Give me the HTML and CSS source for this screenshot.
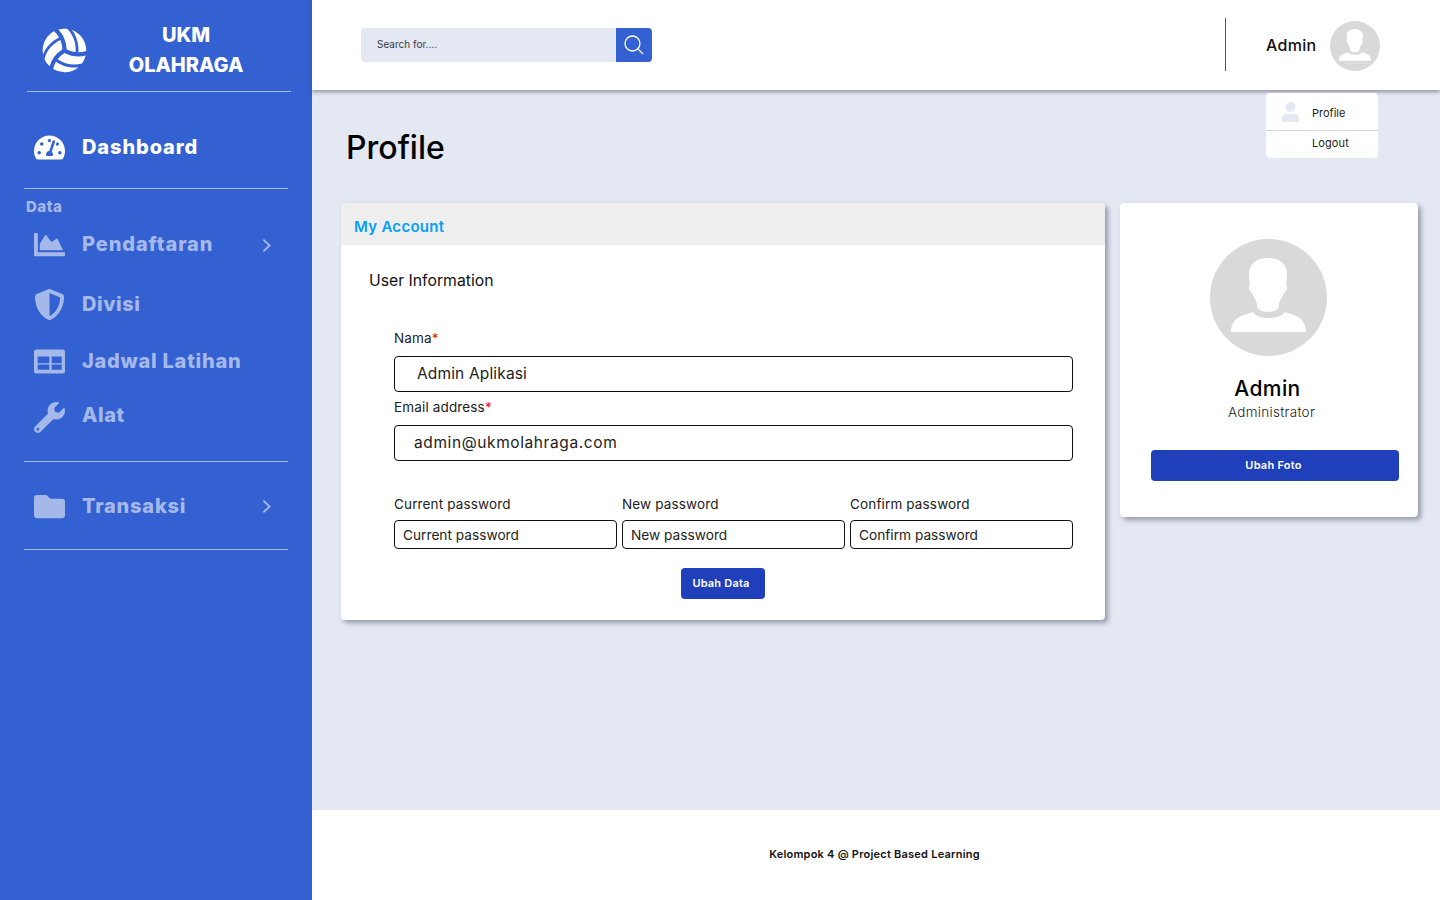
FILE: index.html
```html
<!DOCTYPE html>
<html lang="en">
<head>
<meta charset="utf-8">
<title>Profile</title>
<link rel="stylesheet" href="styles.css">
</head>
<body>
<svg class="defs" width="0" height="0" aria-hidden="true">
  <symbol id="person" viewBox="0 0 117 117">
    <path d="M58 19c11 0 20 6 19 18l-1 8c2 3 1 7-2 9-2 5-5 8-5 12 0 4-4 7-11 7s-11-3-11-7c0-4-3-7-5-12-3-2-4-6-2-9l-1-8c-1-12 8-18 19-18z"/>
    <path d="M21 93c0-9 5-15 13-17l9-3c5 8 27 8 32 0l9 3c7 2 12 8 12 17z"/>
  </symbol>
</svg>
<div class="app">
  <aside class="sidebar">
    <div class="brand">
      <svg class="brand-logo" viewBox="0 0 512 512"><path d="M231.39 243.48a285.56 285.56 0 0 0-22.7-105.7c-90.8 42.4-157.5 122.4-180.3 216.8a249 249 0 0 0 56.9 81.1 333.87 333.87 0 0 1 146.1-192.2zm-36.9-134.4a284.23 284.23 0 0 0-57.4-70.7c-91 49.8-144.8 152.9-125 262.2 33.4-83.1 98.4-152 182.4-191.5zm187.6 165.1c8.6-99.8-27.3-197.5-97.5-264.4-14.7-1.7-51.6-5.5-98.9 8.5A333.87 333.87 0 0 1 279.19 241a285 285 0 0 0 102.9 33.18zm-124.7 9.5a286.33 286.33 0 0 0-80.2 72.6c82 57.3 184.5 75.1 277.5 47.8a247.15 247.15 0 0 0 42.2-89.9 336.1 336.1 0 0 1-80.9 10.4c-54.6-.1-108.9-14.1-158.6-40.9zm-98.3 99.7c-15.2 26-25.7 54.4-32.1 84.2a247.07 247.07 0 0 0 289-22.1c-112.9 16.1-203.3-24.8-256.9-62.1zm180.3-360.6c55.3 70.4 82.5 161.2 74.6 253.6a286.59 286.59 0 0 0 89.7-14.2c0-2 .3-4 .3-6 0-107.8-68.7-199.1-164.6-233.4z"/></svg>
      <div class="brand-name">UKM<br>OLAHRAGA</div>
    </div>
    <a class="nav-item nav-active nav-dash">
      <svg class="nav-icon" viewBox="0 0 576 512"><path d="M288 32C128.94 32 0 160.94 0 320c0 52.8 14.25 102.26 39.06 144.8 5.61 9.62 16.3 15.2 27.44 15.2h443c11.14 0 21.83-5.58 27.44-15.2C561.75 422.26 576 372.8 576 320c0-159.06-128.94-288-288-288zm0 64c14.71 0 26.58 10.13 30.32 23.65-1.11 2.26-2.64 4.23-3.45 6.67l-9.22 27.67c-5.13 3.49-10.97 6.01-17.64 6.01-17.67 0-32-14.33-32-32S270.33 96 288 96zM96 384c-17.67 0-32-14.33-32-32s14.33-32 32-32 32 14.33 32 32-14.33 32-32 32zm48-160c-17.67 0-32-14.33-32-32s14.33-32 32-32 32 14.33 32 32-14.33 32-32 32zm246.77-72.41l-61.33 184C343.13 347.33 352 364.54 352 384c0 11.72-3.38 22.55-8.88 32H232.88c-5.5-9.45-8.88-20.28-8.88-32 0-33.94 26.5-61.43 59.9-63.59l61.34-184.01c4.17-12.56 17.73-19.45 30.36-15.17 12.57 4.19 19.35 17.77 15.17 30.36zm14.66 57.2l15.52-46.55c3.47-1.29 7.13-2.23 11.05-2.23 17.67 0 32 14.33 32 32s-14.33 32-32 32c-11.38-.01-20.89-6.28-26.57-15.22zM480 384c-17.67 0-32-14.33-32-32s14.33-32 32-32 32 14.33 32 32-14.33 32-32 32z"/></svg>
      <span>Dashboard</span>
    </a>
    <hr class="rule">
    <div class="nav-heading">Data</div>
    <a class="nav-item">
      <svg class="nav-icon" viewBox="0 0 512 512"><path d="M500 384c6.6 0 12 5.4 12 12v40c0 6.6-5.4 12-12 12H12c-6.6 0-12-5.4-12-12V76c0-6.6 5.4-12 12-12h40c6.6 0 12 5.4 12 12v308h436zM372.7 159.5L288 216l-85.3-113.7c-5.1-6.8-15.5-6.3-19.9 1L96 248v104h384l-89.9-187.8c-3.2-6.5-11.4-8.7-17.4-4.7z"/></svg>
      <span>Pendaftaran</span>
      <svg class="chevron chevron-low" viewBox="0 0 10 16"><path d="M1.5 1.5 8.5 8l-7 6.5"/></svg>
    </a>
    <a class="nav-item nav-divisi">
      <svg class="nav-icon" viewBox="0 0 512 512"><path d="M466.5 83.7l-192-80a48.15 48.15 0 0 0-36.9 0l-192 80C27.7 91.1 16 108.6 16 128c0 198.5 114.5 335.7 221.5 380.3 11.8 4.9 25.1 4.9 36.9 0C360.1 472.6 496 349.3 496 128c0-19.4-11.7-36.9-29.5-44.3zM256.1 446.3l-.1-381 175.9 73.3c-3.3 151.4-82.1 261.1-175.8 307.7z"/></svg>
      <span>Divisi</span>
    </a>
    <a class="nav-item nav-jadwal">
      <svg class="nav-icon" viewBox="0 -3.5 31 31"><path fill-rule="evenodd" d="M2.5 0h26A2.5 2.5 0 0 1 31 2.500v19a2.500 2.500 0 0 1-2.500 2.500h-26A2.500 2.500 0 0 1 0 21.500v-19A2.500 2.500 0 0 1 2.500 0zM3.700 7v6.700h11.600V7zm14 0v6.700h10V7zm-14 8v5.300h11.600V15zm14 0v5.300h10V15z"/></svg>
      <span>Jadwal Latihan</span>
    </a>
    <a class="nav-item nav-alat">
      <svg class="nav-icon" viewBox="0 0 512 512"><path d="M507.73 109.1c-2.24-9.03-13.54-12.09-20.12-5.51l-74.36 74.36-67.88-11.31-11.31-67.88 74.36-74.36c6.62-6.62 3.43-17.9-5.66-20.16-47.38-11.74-99.55.91-136.58 37.93-39.64 39.64-50.55 97.1-34.05 147.2L18.74 402.76c-24.99 24.99-24.99 65.51 0 90.5 24.99 24.99 65.51 24.99 90.5 0l213.21-213.21c50.12 16.71 107.47 5.68 147.37-34.22 37.07-37.07 49.7-89.32 37.91-136.73zM64 472c-13.25 0-24-10.75-24-24 0-13.26 10.75-24 24-24s24 10.74 24 24c0 13.25-10.75 24-24 24z"/></svg>
      <span>Alat</span>
    </a>
    <hr class="rule rule-tools">
    <a class="nav-item nav-transaksi">
      <svg class="nav-icon" viewBox="0 0 512 512"><path d="M464 128H272l-64-64H48C21.49 64 0 85.49 0 112v288c0 26.51 21.49 48 48 48h416c26.51 0 48-21.49 48-48V176c0-26.51-21.49-48-48-48z"/></svg>
      <span>Transaksi</span>
      <svg class="chevron" viewBox="0 0 10 16"><path d="M1.5 1.5 8.5 8l-7 6.5"/></svg>
    </a>
    <hr class="rule rule-last">
  </aside>

  <div class="main">
    <header class="topbar">
      <form class="search">
        <input class="search-input" type="text" placeholder="Search for....">
        <button class="search-btn" type="button" aria-label="Search">
          <svg viewBox="0 0 20 20"><circle cx="8.5" cy="8.5" r="7.5"/><path d="M14 14l5 5"/></svg>
        </button>
      </form>
      <div class="user">
        <span class="user-name">Admin</span>
        <svg class="avatar avatar-small" viewBox="0 0 117 117"><circle cx="58.5" cy="58.5" r="58.5"/><use href="#person" class="avatar-person"/></svg>
      </div>
      <div class="dropdown">
        <a class="dropdown-item dropdown-profile">
          <svg class="dropdown-icon" viewBox="0 0 17 20"><circle cx="8.5" cy="5" r="5"/><path d="M0 20v-3c0-3 2-5 5-5h7c3 0 5 2 5 5v3z"/></svg>
          <span>Profile</span>
        </a>
        <a class="dropdown-item dropdown-logout"><span>Logout</span></a>
      </div>
    </header>

    <main class="content">
      <h1 class="page-title">Profile</h1>
      <div class="cards">
        <section class="card account">
          <h2 class="account-head">My Account</h2>
          <div class="account-body">
            <h3 class="section-title">User Information</h3>
            <form class="form">
              <label class="label label-first" for="nama">Nama<b class="req">*</b></label>
              <input class="field field-name" id="nama" type="text" value="Admin Aplikasi">
              <label class="label label-mail" for="email">Email address<b class="req">*</b></label>
              <input class="field field-mail" id="email" type="text" value="admin@ukmolahraga.com">
              <div class="pass-grid">
                <div class="pass-col">
                  <label class="label" for="p1">Current password</label>
                  <input class="field field-pass" id="p1" type="password" placeholder="Current password">
                </div>
                <div class="pass-col">
                  <label class="label" for="p2">New password</label>
                  <input class="field field-pass" id="p2" type="password" placeholder="New password">
                </div>
                <div class="pass-col">
                  <label class="label" for="p3">Confirm password</label>
                  <input class="field field-pass" id="p3" type="password" placeholder="Confirm password">
                </div>
              </div>
              <div class="form-actions"><button class="btn btn-data" type="button">Ubah Data</button></div>
            </form>
          </div>
        </section>
        <section class="card person">
          <svg class="avatar avatar-large" viewBox="0 0 117 117"><circle cx="58.5" cy="58.5" r="58.5"/><use href="#person" class="avatar-person"/></svg>
          <div class="person-name">Admin</div>
          <div class="person-role">Administrator</div>
          <button class="btn btn-photo" type="button">Ubah Foto</button>
        </section>
      </div>
    </main>

    <footer class="footer">Kelompok 4 @ Project Based Learning</footer>
  </div>
</div>
</body>
</html>
```
FILE: styles.css
```css
* { box-sizing: border-box; }
html, body { margin: 0; height: 100%; }
body { font-family: Inter, "Open Sans", "Liberation Sans", sans-serif; color: #111; background: #e4e8f3; overflow: hidden; }
.defs { position: absolute; }
.app { display: flex; height: 900px; }

/* Sidebar */
.sidebar { width: 312px; flex: none; background: #3461d1; color: #a5b8ea; display: flex; flex-direction: column; }
.brand { height: 92px; margin: 0 21px 0 27px; padding: 6px 0 0 15px; border-bottom: 1px solid #a5b8ea; display: flex; align-items: flex-start; }
.brand-logo { width: 45px; height: 45px; fill: #fff; margin-top: 22px; flex: none; }
.brand-name { width: 130px; margin: 14px 0 0 34px; text-align: center; color: #fff; font-weight: 800; font-size: 20px; line-height: 30px; }
.nav-item { height: 40px; margin-left: 34px; display: flex; align-items: center; font-weight: 800; font-size: 20px; letter-spacing: .9px; }
.nav-active { color: #fff; }
.nav-dash { margin-top: 35px; }
.nav-icon { width: 31px; height: 31px; fill: currentColor; flex: none; margin-right: 17px; }
.chevron { width: 9px; height: 15px; margin-left: auto; margin-right: 41px; fill: none; stroke: currentColor; stroke-width: 2; }
.chevron-low { margin-top: 2px; }
.rule { border: 0; border-top: 1px solid #a5b8ea; margin: 21px 24px 0; }
.nav-heading { margin: 9px 0 0 26px; height: 26px; font-size: 15px; font-weight: 800; line-height: 18px; letter-spacing: .5px; }
.nav-divisi { margin-top: 20px; letter-spacing: .55px; }
.nav-divisi .nav-icon { margin-top: 1px; }
.nav-jadwal { margin-top: 17px; letter-spacing: .75px; }
.nav-alat { margin-top: 14px; letter-spacing: .6px; }
.nav-alat .nav-icon { margin-top: 5px; }
.rule-tools { margin-top: 26px; }
.nav-transaksi { margin-top: 24px; letter-spacing: .8px; }
.rule-last { margin-top: 23px; }

/* Top bar */
.main { flex: 1; min-width: 0; display: flex; flex-direction: column; }
.topbar { height: 90px; flex: none; background: #fff; box-shadow: 0 2px 4px rgba(70,78,100,.55); position: relative; z-index: 2; display: flex; align-items: flex-start; padding: 28px 60px 0 49px; }
.search { display: flex; width: 291px; height: 34px; border-radius: 4px; overflow: hidden; }
.search-input { flex: 1; min-width: 0; border: 0; background: #e4e8f3; padding: 0 0 2px 16px; font: 400 10px Inter, sans-serif; }
.search-input::placeholder { color: #3a3a3a; opacity: 1; }
.search-btn { width: 36px; flex: none; border: 0; padding: 0; background: #3461d1; display: flex; align-items: center; justify-content: center; }
.search-btn svg { width: 20px; height: 20px; fill: none; stroke: #fff; stroke-width: 1.3; }
.user { margin-left: auto; margin-top: -10px; width: 155px; height: 53px; border-left: 1px solid #555; display: flex; align-items: flex-start; padding: 3px 0 0 40px; }
.user-name { font-size: 16px; font-weight: 500; line-height: 48px; letter-spacing: .3px; color: #111; }
.avatar { fill: #d9d9d9; flex: none; }
.avatar-person { fill: #fff; }
.avatar-small { width: 50px; height: 50px; margin-left: auto; }
.dropdown { position: absolute; top: 93px; left: 954px; width: 112px; height: 65px; background: #fff; border-radius: 4px; font-size: 11px; color: #222; }
.dropdown-item { display: flex; align-items: center; }
.dropdown-profile { height: 38px; padding: 2px 0 0 16px; border-bottom: 1px solid #d9d9d9; }
.dropdown-profile .dropdown-icon { margin-top: -2px; }
.dropdown-logout { height: 27px; padding: 0 0 3px 46px; letter-spacing: .1px; }
.dropdown-icon { width: 17px; height: 20px; fill: #e4e8f3; margin-right: 13px; }

/* Content */
.content { flex: 1; min-height: 0; padding: 0 22px 0 29px; }
.page-title { margin: 0; height: 113px; padding: 36px 0 0 5px; font-size: 32px; font-weight: 500; line-height: 44px; color: #000; }
.cards { display: flex; align-items: flex-start; gap: 15px; }
.card { background: #fff; border-radius: 4px; box-shadow: 3px 3px 5px rgba(70,78,100,.5); }
.account { width: 764px; height: 417px; overflow: hidden; }
.account-head { margin: 0; height: 42px; padding: 14px 13px 0; background: #eee; color: #069ff8; font-size: 15px; font-weight: 600; line-height: 20px; letter-spacing: .28px; }
.account-body { padding: 26px 32px 0 28px; }
.section-title { margin: 0 0 38px; font-size: 15.75px; font-weight: 400; line-height: 20px; color: #111; }
.form { margin-left: 25px; }
.label { display: block; font-size: 13.5px; line-height: 18px; color: #222; letter-spacing: .15px; }
.label-mail { margin-top: 6px; }
.req { color: #e11; font-weight: 400; }
.field { display: block; width: 100%; border: 1px solid #111; border-radius: 4px; background: #fff; color: #222; outline: 0; font-family: inherit; }
.field-name, .field-mail { height: 36px; margin-top: 9px; font-size: 15.5px; padding-bottom: 3px; }
.field-name { padding-left: 22px; padding-right: 22px; letter-spacing: .15px; }
.field-mail { padding-left: 19px; padding-right: 19px; letter-spacing: .6px; }
.pass-grid { margin-top: 34px; display: grid; grid-template-columns: repeat(3, 1fr); gap: 5px; }
.field-pass { height: 29px; margin-top: 7px; padding: 0 8px; font-size: 13.7px; }
.field-pass::placeholder { color: #222; opacity: 1; }
.form-actions { margin-top: 19px; display: flex; justify-content: center; padding-right: 21px; }
.btn { border: 0; border-radius: 4px; background: #1f3fbb; color: #fff; font-family: inherit; font-size: 11px; font-weight: 600; height: 31px; padding: 0 2px 2px 0; letter-spacing: .25px; }
.btn-data { width: 84px; padding-right: 4px; letter-spacing: .2px; }

.person { width: 298px; height: 314px; display: flex; flex-direction: column; align-items: center; padding-top: 36px; }
.avatar-large { width: 117px; height: 117px; margin-right: 2px; }
.person-name { margin-top: 20px; font-size: 21px; font-weight: 500; line-height: 26px; color: #000; margin-right: 3px; letter-spacing: .4px; }
.person-role { margin: 0 0 0 5px; font-size: 13.5px; font-weight: 300; line-height: 20px; color: #222; letter-spacing: .3px; }
.btn-photo { width: 248px; margin: 28px 0 0 11px; }

/* Footer */
.footer { height: 90px; flex: none; background: #fff; display: flex; align-items: center; justify-content: center; font-size: 11px; font-weight: 600; color: #111; padding: 0 3px 2px 0; letter-spacing: .23px; }
```
